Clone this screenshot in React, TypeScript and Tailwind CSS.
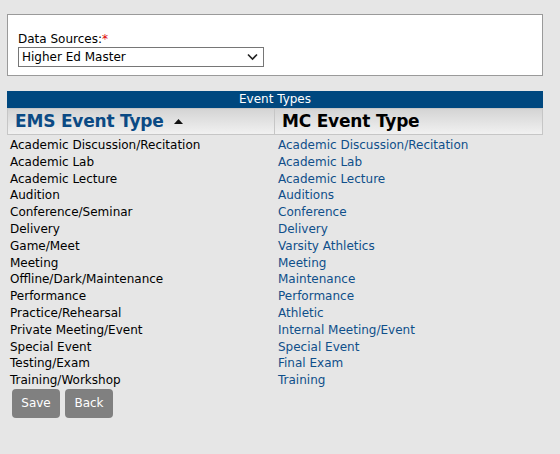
import { useState } from "react";

const rows: [string, string][] = [
  ["Academic Discussion/Recitation", "Academic Discussion/Recitation"],
  ["Academic Lab", "Academic Lab"],
  ["Academic Lecture", "Academic Lecture"],
  ["Audition", "Auditions"],
  ["Conference/Seminar", "Conference"],
  ["Delivery", "Delivery"],
  ["Game/Meet", "Varsity Athletics"],
  ["Meeting", "Meeting"],
  ["Offline/Dark/Maintenance", "Maintenance"],
  ["Performance", "Performance"],
  ["Practice/Rehearsal", "Athletic"],
  ["Private Meeting/Event", "Internal Meeting/Event"],
  ["Special Event", "Special Event"],
  ["Testing/Exam", "Final Exam"],
  ["Training/Workshop", "Training"],
];

export default function App() {
  const [source, setSource] = useState("Higher Ed Master");

  return (
    <div className="min-h-[454px] w-[560px] bg-[#e6e6e6] pt-[14px] font-['DejaVu_Sans',sans-serif] text-[12px] text-black">
      {/* Data source box */}
      <div className="mx-[7px] w-[536px] h-[62px] border border-[#9a9a9a] bg-white px-[10px] pt-[17px]">
        <div className="leading-[15px] text-[12px]">
          Data Sources:<span className="text-[#e00000]">*</span>
        </div>
        <div className="relative w-[246px]">
          <select
            value={source}
            onChange={(e) => setSource(e.target.value)}
            className="block w-[246px] h-[20px] appearance-none border border-[#767676] bg-white pl-[3px] text-[12px] leading-[18px] outline-none"
          >
            <option>Higher Ed Master</option>
          </select>
          <svg
            className="pointer-events-none absolute right-[6px] top-[6px]"
            width="11"
            height="8"
            viewBox="0 0 11 8"
          >
            <path d="M1 1.5 L5.5 6 L10 1.5" fill="none" stroke="#222" strokeWidth="1.6" />
          </svg>
        </div>
      </div>

      {/* Event types table */}
      <div className="mx-[7px] mt-[15px] w-[536px]">
        <div className="h-[17px] bg-[#00487f] text-center text-[12px] leading-[17px] text-white">
          Event Types
        </div>
        <div className="grid grid-cols-[268px_268px]">
          <div className="flex h-[27px] items-center border border-[#c6c6c6] bg-gradient-to-b from-[#d4d4d4] to-[#f1f1f1] pl-[7px] text-[17px] font-bold tracking-[-0.2px] text-[#0b4a84]">
            EMS Event Type
            <svg className="ml-[10px]" width="9" height="5" viewBox="0 0 9 5">
              <path d="M0 5 L4.5 0 L9 5 Z" fill="#111" />
            </svg>
          </div>
          <div className="flex h-[27px] items-center border border-l-0 border-[#c6c6c6] bg-gradient-to-b from-[#d4d4d4] to-[#f1f1f1] pl-[7px] text-[17px] font-bold tracking-[-0.2px] text-black">
            MC Event Type
          </div>
        </div>
        <div className="pt-[2px]">
          {rows.map(([ems, mc]) => (
            <div key={ems} className="grid h-[16.8px] grid-cols-[268px_268px] leading-[16.8px]">
              <div className="pl-[3px]">{ems}</div>
              <div className="pl-[3px] text-[#0f4f8a]">{mc}</div>
            </div>
          ))}
        </div>
        <div className="flex gap-[5px] pl-[5px]">
          <button className="h-[29px] w-[48px] rounded-[4px] bg-[#808080] text-[12px] text-white">
            Save
          </button>
          <button className="h-[29px] w-[48px] rounded-[4px] bg-[#808080] text-[12px] text-white">
            Back
          </button>
        </div>
      </div>
    </div>
  );
}
